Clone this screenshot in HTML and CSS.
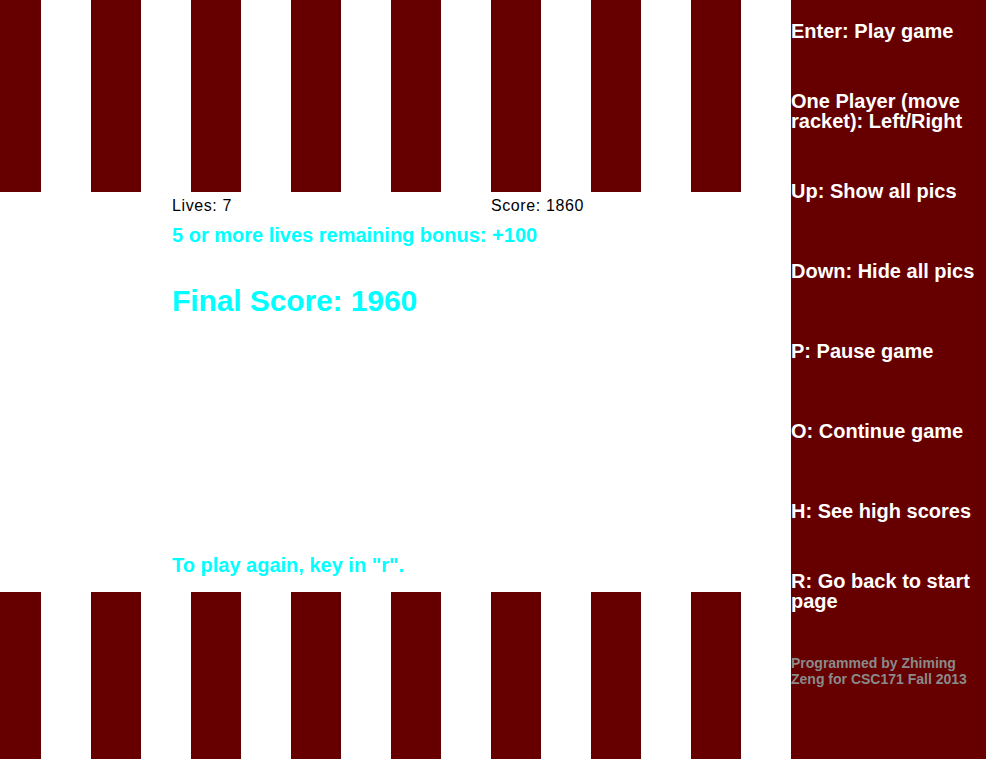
FILE: index.html
```html
<!DOCTYPE html>
<html>
<head>
<meta charset="utf-8">
<title>Pong - Game Over</title>
<link rel="stylesheet" href="styles.css">
</head>
<body>
<div class="app">
  <main class="board">
    <div class="stripes stripes-top"></div>
    <section class="field">
      <div class="stats">
        <span class="stat">Lives: 7</span>
        <span class="stat">Score: 1860</span>
      </div>
      <p class="bonus">5 or more lives remaining bonus: +100</p>
      <p class="final">Final Score: 1960</p>
      <p class="again">To play again, key in "r".</p>
    </section>
    <div class="stripes stripes-bottom"></div>
  </main>
  <aside class="sidebar">
    <div class="keys">
      <div class="key">Enter: Play game</div>
      <div class="key">One Player (move racket): Left/Right</div>
      <div class="key">Up: Show all pics</div>
      <div class="key">Down: Hide all pics</div>
      <div class="key">P: Pause game</div>
      <div class="key">O: Continue game</div>
      <div class="key">H: See high scores</div>
      <div class="key">R: Go back to start page</div>
      <div class="key credit">Programmed by Zhiming Zeng for CSC171 Fall 2013</div>
    </div>
  </aside>
</div>
</body>
</html>
```

FILE: styles.css
```css
* { box-sizing: border-box; }
html, body {
  margin: 0;
  padding: 0;
  background: #ffffff;
  font-family: "Liberation Sans", Arial, sans-serif;
}
.app {
  display: flex;
  width: 986px;
  height: 759px;
  overflow: hidden;
}
.board {
  flex: 0 0 791px;
  width: 791px;
  display: flex;
  flex-direction: column;
}
.stripes {
  background-image: repeating-linear-gradient(to right, #660000 0, #660000 50px, #ffffff 50px, #ffffff 100px);
  background-size: 100px 100%;
  background-position: -9px 0;
  background-repeat: repeat-x;
}
.stripes-top { height: 192px; }
.stripes-bottom { height: 167px; }
.field {
  height: 400px;
  padding: 4px 0 15px 172px;
  display: flex;
  flex-direction: column;
}
.stats {
  display: grid;
  grid-template-columns: 319px auto;
  font-size: 16px;
  line-height: 20px;
  letter-spacing: 0.6px;
  color: #000000;
}
.bonus, .final, .again {
  margin: 0;
  color: #00ffff;
  font-weight: bold;
}
.bonus {
  margin-top: 7px;
  font-size: 20px;
  line-height: 24px;
}
.final {
  margin-top: 36px;
  font-size: 30px;
  line-height: 36px;
  letter-spacing: -0.1px;
}
.again {
  margin-top: auto;
  font-size: 20px;
  line-height: 24px;
}
.sidebar {
  flex: 0 0 195px;
  width: 195px;
  background: #660000;
  color: #ffffff;
}
.keys {
  margin-top: -9px;
  display: flex;
  flex-direction: column;
}
.key {
  height: 80px;
  display: flex;
  align-items: center;
  font-size: 20px;
  line-height: 20px;
  font-weight: bold;
}
.credit {
  font-size: 14px;
  line-height: 16px;
  color: #8a8a8a;
}
```
